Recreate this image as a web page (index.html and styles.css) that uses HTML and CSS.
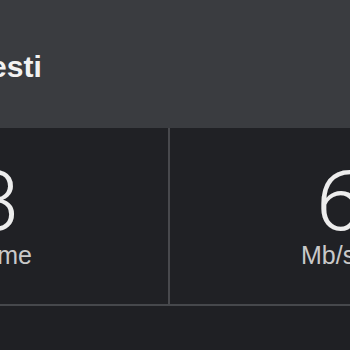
FILE: index.html
```html
<!DOCTYPE html>
<html>
<head>
<meta charset="utf-8">
<link rel="stylesheet" href="styles.css">
</head>
<body>
<div class="page">
  <header class="header">
    <h1 class="title">Testi</h1>
  </header>
  <section class="stats">
    <div class="cell cell-left">
      <div class="num num-left">3</div>
      <div class="label label-left">Time</div>
    </div>
    <div class="cell cell-right">
      <div class="num num-right">6</div>
      <div class="label label-right">Mb/s</div>
    </div>
  </section>
</div>
</body>
</html>
```

FILE: styles.css
```css
html, body {
  margin: 0;
  padding: 0;
  background: #1f2024;
}
.page {
  width: 350px;
  height: 350px;
  overflow: hidden;
  background: #1f2024;
}
.header {
  height: 128px;
  background: #3a3c40;
  display: flex;
  align-items: flex-start;
}
.title {
  margin: 47px 0 0 -26px;
  font-family: "Liberation Sans", Arial, sans-serif;
  font-weight: 700;
  font-size: 30px;
  line-height: 40px;
  color: #f2f2f2;
  white-space: nowrap;
}
.stats {
  display: grid;
  grid-template-columns: 170px 180px;
  height: 176px;
  border-bottom: 2px solid #46484c;
  background: #202125;
}
.cell {
  display: flex;
  flex-direction: column;
  padding-top: 32px;
  overflow: hidden;
}
.cell-left {
  align-items: flex-end;
  border-right: 2px solid #48494d;
}
.cell-right {
  align-items: flex-start;
}
.num {
  font-family: Roboto, "Liberation Sans", sans-serif;
  font-weight: 300;
  font-size: 84px;
  line-height: 1;
  color: #ededed;
}
.num-left {
  margin-right: 149px;
}
.num-right {
  margin-left: 146px;
}
.label {
  margin-top: -1px;
  font-family: "Liberation Sans", Arial, sans-serif;
  font-size: 25px;
  line-height: 1;
  color: #c9c9c9;
  white-space: nowrap;
}
.label-left {
  margin-right: 136px;
}
.label-right {
  margin-left: 131px;
}
```
